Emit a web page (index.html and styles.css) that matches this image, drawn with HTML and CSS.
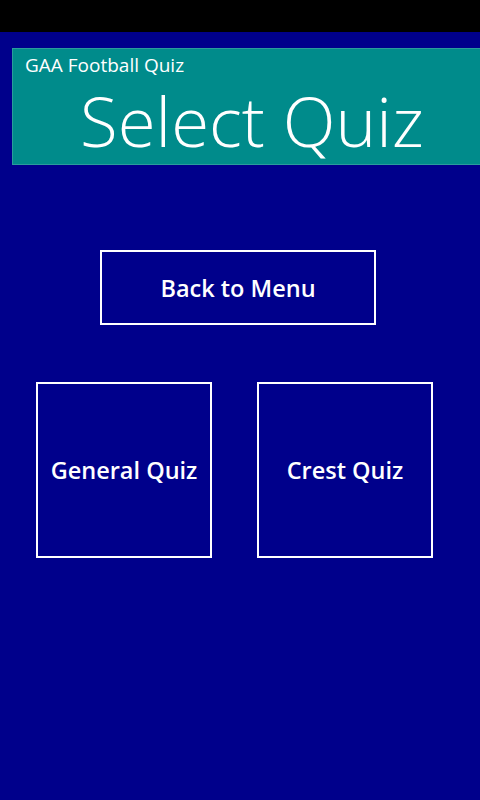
FILE: index.html
```html
<!DOCTYPE html>
<html lang="en">
<head>
    <meta charset="UTF-8">
    <meta name="viewport" content="width=device-width, initial-scale=1.0">
    <title>GAA Football Quiz</title>
    <link rel="stylesheet" href="styles.css">
</head>
<body>
    <div class="status-bar"></div>

    <div class="header">
        <div class="app-title">GAA Football Quiz</div>
        <h1 class="page-title">Select Quiz</h1>
    </div>

    <div class="content">
        <button class="btn btn-back">Back to Menu</button>

        <div class="tiles">
            <button class="btn tile">General Quiz</button>
            <button class="btn tile">Crest Quiz</button>
        </div>
    </div>
</body>
</html>
```

FILE: styles.css
```css
body {
    margin: 0;
    width: 480px;
    height: 800px;
    background: #00008b;
    color: #fff;
    font-family: 'Open Sans', 'Noto Sans', sans-serif;
    overflow: hidden;
}
.status-bar {
    height: 32px;
    background: #000;
}
.header {
    margin: 16px 0 0 12px;
    height: 115px;
    background: #008b8b;
    border: 1px solid #2a9c9c;
    border-right: none;
}
.app-title {
    padding: 5px 0 0 12px;
    font-size: 19px;
    line-height: 22px;
}
.page-title {
    margin: 8px 0 0 0;
    padding-left: 67px;
    font-size: 69px;
    font-weight: 300;
    line-height: 72px;
}
.content {
    padding: 85px 0 0 0;
}
.btn {
    display: flex;
    align-items: center;
    justify-content: center;
    background: transparent;
    border: 2px solid #fff;
    color: #fff;
    font-family: 'Open Sans', 'Noto Sans', sans-serif;
    font-weight: 600;
    font-size: 23.5px;
    padding: 0;
    box-sizing: border-box;
}
.btn-back {
    margin-left: 100px;
    width: 276px;
    height: 75px;
}
.tiles {
    display: flex;
    gap: 45px;
    margin: 57px 0 0 36px;
}
.tile {
    width: 176px;
    height: 176px;
}
```
